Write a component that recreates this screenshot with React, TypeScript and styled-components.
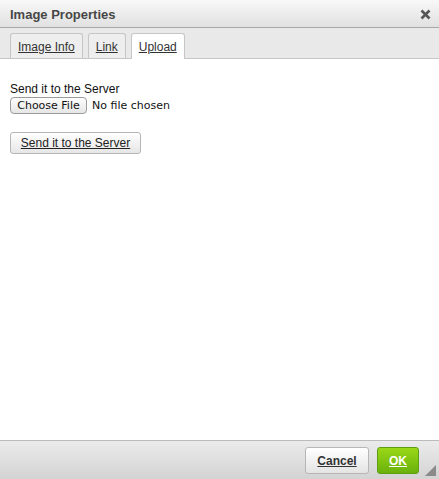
import styled, { createGlobalStyle } from 'styled-components';

const Global = createGlobalStyle`
  html, body {
    margin: 0;
    padding: 0;
    background: #fff;
  }
  body {
    font-family: Arial, "Liberation Sans", Helvetica, sans-serif;
    font-size: 12px;
    color: #222;
  }
`;

const Dialog = styled.div`
  width: 439px;
  height: 479px;
  display: flex;
  flex-direction: column;
  background: #fff;
  overflow: hidden;
`;

const TitleBar = styled.div`
  height: 27px;
  flex: none;
  display: flex;
  align-items: center;
  justify-content: space-between;
  padding: 0 8px 0 10px;
  background: linear-gradient(to bottom, #f8f8f8, #e1e1e1);
  border-bottom: 1px solid #a8a8a8;
  box-sizing: content-box;
`;

const Title = styled.div`
  font-family: Arial, "Liberation Sans", sans-serif;
  font-size: 13px;
  font-weight: bold;
  color: #474747;
  padding-top: 1px;
`;

const Close = styled.div`
  width: 11px;
  height: 11px;
  display: flex;
  margin-top: 1px;
`;

const TabStrip = styled.div`
  height: 25px;
  flex: none;
  display: flex;
  align-items: flex-end;
  gap: 5px;
  padding: 5px 10px 0;
  background: #e9e9e9;
  border-bottom: 1px solid #c6c6c6;
`;

const Tab = styled.div<{ $active?: boolean }>`
  box-sizing: border-box;
  display: flex;
  align-items: center;
  padding: 1px 7px 0;
  margin-bottom: ${p => (p.$active ? -1 : 0)}px;
  height: ${p => (p.$active ? 26 : 25)}px;
  border: 1px solid #c6c6c6;
  border-bottom: none;
  border-radius: 3px 3px 0 0;
  background: ${p => (p.$active ? '#fff' : '#eee')};
  color: #333;
  text-decoration: underline;
  font-size: 12px;
`;

const Body = styled.div`
  flex: 1;
  padding: 23px 10px 0;
  display: flex;
  flex-direction: column;
  align-items: flex-start;
`;

const Label = styled.div`
  font-size: 12px;
  color: #111;
  line-height: 14px;
`;

const FileRow = styled.div`
  display: flex;
  align-items: center;
  gap: 5px;
  margin-top: 1px;
  font-family: "DejaVu Sans", "Noto Sans", sans-serif;
  font-size: 11px;
  color: #111;
`;

const FileButton = styled.div`
  height: 17px;
  box-sizing: border-box;
  width: 77px;
  display: flex;
  align-items: center;
  justify-content: center;
  border: 1px solid #9b9b9b;
  border-radius: 4px;
  background: linear-gradient(to bottom, #fdfdfd, #e6e6e6);
  font-size: 11px;
`;

const SendButton = styled.div`
  margin-top: 18px;
  height: 22px;
  width: 131px;
  box-sizing: border-box;
  display: flex;
  align-items: center;
  justify-content: center;
  border: 1px solid #b6b6b6;
  border-radius: 3px;
  background: linear-gradient(to bottom, #fff, #e6e6e6);
  color: #222;
  text-decoration: underline;
  font-size: 12px;
`;

const Footer = styled.div`
  height: 38px;
  flex: none;
  display: flex;
  align-items: center;
  justify-content: flex-end;
  padding: 0 3px 0 0;
  gap: 8px;
  border-top: 1px solid #bbb;
  background: linear-gradient(to bottom, #ebebeb, #d3d3d3);
`;

const FooterButton = styled.div<{ $ok?: boolean }>`
  height: 27px;
  width: ${p => (p.$ok ? 42 : 64)}px;
  box-sizing: border-box;
  display: flex;
  align-items: center;
  justify-content: center;
  border-radius: 3px;
  font-weight: bold;
  font-size: 12px;
  text-decoration: underline;
  margin-top: 1px;
  border: 1px solid ${p => (p.$ok ? '#5f9d12' : '#b6b6b6')};
  color: ${p => (p.$ok ? '#fff' : '#333')};
  background: ${p =>
    p.$ok
      ? 'linear-gradient(to bottom, #9ad717, #69b10b)'
      : 'linear-gradient(to bottom, #fff, #e4e4e4)'};
`;

const Grip = styled.div`
  width: 11px;
  height: 27px;
  margin-left: -2px;
  display: flex;
  align-items: flex-end;
  margin-top: 4px;
`;

export default function App() {
  return (
    <Dialog>
      <Global />
      <TitleBar>
        <Title>Image Properties</Title>
        <Close>
          <svg width="11" height="11" viewBox="0 0 11 11">
            <path d="M1.5 1.5 L9.5 9.5 M9.5 1.5 L1.5 9.5" stroke="#555" strokeWidth="2.6" />
          </svg>
        </Close>
      </TitleBar>
      <TabStrip>
        <Tab>Image Info</Tab>
        <Tab>Link</Tab>
        <Tab $active>Upload</Tab>
      </TabStrip>
      <Body>
        <Label>Send it to the Server</Label>
        <FileRow>
          <FileButton>Choose File</FileButton>
          <span>No file chosen</span>
        </FileRow>
        <SendButton>Send it to the Server</SendButton>
      </Body>
      <Footer>
        <FooterButton>Cancel</FooterButton>
        <FooterButton $ok>OK</FooterButton>
        <Grip>
          <svg width="11" height="11" viewBox="0 0 11 11">
            <path d="M11 0 L11 11 L0 11 Z" fill="#8a8a8a" />
          </svg>
        </Grip>
      </Footer>
    </Dialog>
  );
}
